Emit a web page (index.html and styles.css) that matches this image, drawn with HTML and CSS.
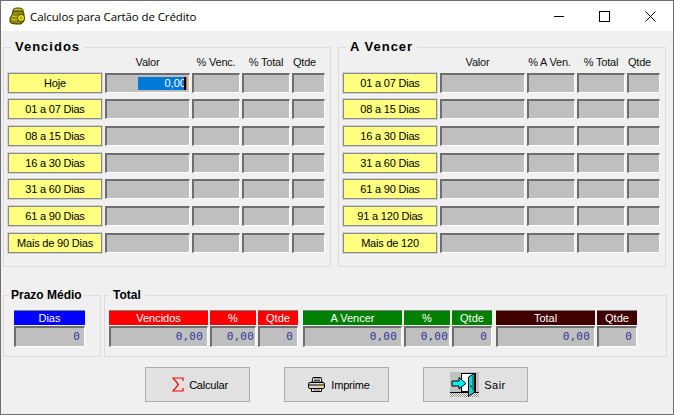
FILE: index.html
```html
<!DOCTYPE html>
<html lang="en">
<head>
  <meta charset="UTF-8">
  <meta name="viewport" content="width=device-width, initial-scale=1.0">
  <title>Calculos para Cartão de Crédito</title>
  <link rel="stylesheet" href="styles.css">
</head>
<body>
  <div class="window">
    <div class="titlebar">
      <svg class="app-icon" width="17" height="18" viewBox="0 0 17 18">
        <ellipse cx="9" cy="3.5" rx="5" ry="2.5" fill="#c9c30a" stroke="#3a3a00"/>
        <path d="M4 4 L3 8 L1 11 L1 15 Q2 17 7 17 L12 17 L15 14 L15 7 L14 4 Z" fill="#8f8a08" stroke="#3a3a00"/>
        <path d="M3 9 Q7 11 10 9 M2 12 Q6 14 9 12" fill="none" stroke="#d8d420"/>
        <circle cx="12" cy="11" r="3.6" fill="#e8e420" stroke="#4a4a00"/>
        <circle cx="12" cy="11" r="1.5" fill="#a8a410"/>
      </svg>
      <span class="title-text">Calculos para Cartão de Crédito</span>
      <div class="win-controls">
        <svg width="10" height="11" viewBox="0 0 10 11"><path d="M0 5.5H10" stroke="#000"/></svg>
        <svg width="11" height="11" viewBox="0 0 11 11"><rect x="0.5" y="0.5" width="10" height="10" fill="none" stroke="#000"/></svg>
        <svg width="11" height="11" viewBox="0 0 11 11"><path d="M0.5 0.5L10.5 10.5M10.5 0.5L0.5 10.5" stroke="#000"/></svg>
      </div>
    </div>

    <div class="content">
      <div class="top-groups">
        <fieldset class="group group-main">
          <legend>Vencidos</legend>
          <div class="table">
            <span></span><span class="col-head">Valor</span><span class="col-head">% Venc.</span><span class="col-head">% Total</span><span class="col-head qtde">Qtde</span>
            <div class="label">Hoje</div>
            <div class="cell"><span class="selected">0,00</span></div><div class="cell"></div><div class="cell"></div><div class="cell"></div>
            <div class="label">01 a 07 Dias</div>
            <div class="cell"></div><div class="cell"></div><div class="cell"></div><div class="cell"></div>
            <div class="label">08 a 15 Dias</div>
            <div class="cell"></div><div class="cell"></div><div class="cell"></div><div class="cell"></div>
            <div class="label">16 a 30 Dias</div>
            <div class="cell"></div><div class="cell"></div><div class="cell"></div><div class="cell"></div>
            <div class="label">31 a 60 Dias</div>
            <div class="cell"></div><div class="cell"></div><div class="cell"></div><div class="cell"></div>
            <div class="label">61 a 90 Dias</div>
            <div class="cell"></div><div class="cell"></div><div class="cell"></div><div class="cell"></div>
            <div class="label">Mais de 90 Dias</div>
            <div class="cell"></div><div class="cell"></div><div class="cell"></div><div class="cell"></div>
          </div>
        </fieldset>

        <fieldset class="group group-main">
          <legend>A Vencer</legend>
          <div class="table">
            <span></span><span class="col-head shift">Valor</span><span class="col-head shift-small">% A Ven.</span><span class="col-head">% Total</span><span class="col-head qtde">Qtde</span>
            <div class="label">01 a 07 Dias</div>
            <div class="cell"></div><div class="cell"></div><div class="cell"></div><div class="cell"></div>
            <div class="label">08 a 15 Dias</div>
            <div class="cell"></div><div class="cell"></div><div class="cell"></div><div class="cell"></div>
            <div class="label">16 a 30 Dias</div>
            <div class="cell"></div><div class="cell"></div><div class="cell"></div><div class="cell"></div>
            <div class="label">31 a 60 Dias</div>
            <div class="cell"></div><div class="cell"></div><div class="cell"></div><div class="cell"></div>
            <div class="label">61 a 90 Dias</div>
            <div class="cell"></div><div class="cell"></div><div class="cell"></div><div class="cell"></div>
            <div class="label">91 a 120 Dias</div>
            <div class="cell"></div><div class="cell"></div><div class="cell"></div><div class="cell"></div>
            <div class="label">Mais de 120</div>
            <div class="cell"></div><div class="cell"></div><div class="cell"></div><div class="cell"></div>
          </div>
        </fieldset>
      </div>

      <div class="bottom-groups">
        <fieldset class="group group-prazo">
          <legend>Prazo Médio</legend>
          <div class="stat w-dias">
            <div class="stat-head blue">Dias</div>
            <div class="stat-value">0</div>
          </div>
        </fieldset>

        <fieldset class="group group-total">
          <legend>Total</legend>
          <div class="stats">
            <div class="stat w-valor"><div class="stat-head red">Vencidos</div><div class="stat-value">0,00</div></div>
            <div class="stat w-perc"><div class="stat-head red">%</div><div class="stat-value">0,00</div></div>
            <div class="stat w-qtde"><div class="stat-head red">Qtde</div><div class="stat-value">0</div></div>
            <div class="stat w-valor sep"><div class="stat-head green">A Vencer</div><div class="stat-value">0,00</div></div>
            <div class="stat w-perc"><div class="stat-head green">%</div><div class="stat-value">0,00</div></div>
            <div class="stat w-qtde"><div class="stat-head green">Qtde</div><div class="stat-value">0</div></div>
            <div class="stat w-valor sep-small"><div class="stat-head maroon">Total</div><div class="stat-value">0,00</div></div>
            <div class="stat w-qtde"><div class="stat-head maroon">Qtde</div><div class="stat-value">0</div></div>
          </div>
        </fieldset>
      </div>

      <div class="actions">
        <button class="btn">
          <svg width="12" height="15" viewBox="0 0 12 15"><path d="M11 4V1H1L6.5 7.5L1 14H11V11" fill="none" stroke="#f00" stroke-width="1.2"/></svg>
          Calcular
        </button>
        <button class="btn">
          <svg width="18" height="15" viewBox="0 0 18 15">
            <path d="M5 .5H13L14 5H4Z" fill="#fff" stroke="#000"/>
            <path d="M6 2H12M6 3.5H12" stroke="#000" stroke-width=".7"/>
            <rect x=".5" y="5.5" width="16" height="6" rx="1.5" fill="#d8d8d8" stroke="#000"/>
            <path d="M1 8H16" stroke="#000"/>
            <path d="M10 9.5H14" stroke="#ffd800" stroke-width="1.5"/>
            <path d="M3.5 11.5H13.5V14.5H3.5Z" fill="#fff" stroke="#000"/>
            <path d="M5 13H12" stroke="#000" stroke-width=".7"/>
          </svg>
          Imprime
        </button>
        <button class="btn">
          <svg width="29" height="25" viewBox="0 0 29 25">
            <defs>
              <pattern id="dither" width="2" height="2" patternUnits="userSpaceOnUse">
                <rect width="2" height="2" fill="#fff"/><rect width="1" height="1" fill="#888"/><rect x="1" y="1" width="1" height="1" fill="#888"/>
              </pattern>
            </defs>
            <rect width="29" height="20" fill="#c0c0c0"/>
            <rect y="20" width="29" height="5" fill="url(#dither)"/>
            <rect x="11.500" y="1.500" width="14" height="18" fill="#fff" stroke="#000"/>
            <path d="M0 20.500H29" stroke="#000"/>
            <path d="M18.500 5L24.500 1.500V20L18.500 24.500Z" fill="#00d8d8" stroke="#000"/>
            <path d="M23 3.500V19" stroke="#008080" stroke-width="1.5"/>
            <circle cx="21" cy="14.500" r="1" fill="#004040"/>
            <path d="M2 9H9V5.500L16 11.500L9 17V14H2Z" fill="#00f0f0" stroke="#000"/>
          </svg>
          <span class="sair">Sair</span>
        </button>
      </div>
    </div>
  </div>
</body>
</html>
```

FILE: styles.css
```css
* {
  box-sizing: border-box;
}
body {
  margin: 0;
  font-family: "Liberation Sans", Arial, sans-serif;
  font-size: 11px;
  color: #000;
  background: #f0f0f0;
}
.window {
  width: 674px;
  height: 415px;
  display: flex;
  flex-direction: column;
  border: 1px solid #6f6f6f;
}
.titlebar {
  height: 30px;
  flex: none;
  background: #fff;
  display: flex;
  align-items: center;
  padding-left: 8px;
}
.app-icon {
  margin-right: 4px;
}
.title-text {
  font-family: "Open Sans", sans-serif;
  font-size: 11.5px;
  letter-spacing: -0.1px;
}
.win-controls {
  margin-left: auto;
  margin-right: 17px;
  display: flex;
  align-items: center;
  gap: 35px;
}
.content {
  flex: 1;
  background: #f0f0f0;
  padding: 8px 0 0 2px;
  display: flex;
  flex-direction: column;
}
.top-groups {
  display: flex;
  gap: 7px;
}
.group {
  margin: 0;
  border: 1px solid #dcdcdc;
  padding: 0;
}
.group legend {
  font-size: 13px;
  font-weight: bold;
  line-height: 16px;
  padding: 0 4px;
  margin-left: 3px;
  letter-spacing: 1px;
}
.group-main {
  width: 328px;
  height: 228px;
  padding: 0 0 0 4px;
}
.table {
  display: grid;
  grid-template-columns: 95px 85px 48px 48px 33px;
  grid-template-rows: 11px repeat(7, 20px);
  column-gap: 2px;
  row-gap: 6.67px;
}
.col-head {
  text-align: center;
  line-height: 14px;
  white-space: nowrap;
  letter-spacing: -0.2px;
  color: #111;
}
.shift {
  padding-right: 10px;
}
.shift-small {
  padding-right: 3px;
}
.qtde {
  padding-right: 8px;
}
.label {
  margin-right: 1px;
  background: #ffff80;
  border: 1px solid #8a8a8a;
  box-shadow: 0 0 0 0.5px #b0b0b0;
  text-align: center;
  line-height: 18px;
  letter-spacing: -0.2px;
}
.cell {
  background: #bfbfbf;
  border-style: solid;
  border-width: 2px 1px 1px 2px;
  border-color: #6e6e6e #fff #fff #6e6e6e;
  display: flex;
  justify-content: flex-end;
  align-items: center;
  overflow: hidden;
}
.selected {
  position: relative;
  width: 49px;
  height: 13px;
  margin-right: 2px;
  background: #0078d7;
  color: #fff;
  text-align: right;
  line-height: 13px;
  border-right: 1px solid #e06a10;
}
.selected::after {
  content: "";
  position: absolute;
  right: 0;
  top: 0;
  width: 2px;
  height: 13px;
  background: #000;
}
.bottom-groups {
  display: flex;
  gap: 3px;
  margin-top: 20px;
}
.group-prazo {
  width: 98px;
  height: 70px;
  padding: 0 0 0 10px;
}
.group-prazo legend {
  padding: 0 2px;
  margin-left: -5px;
  font-size: 12px;
  letter-spacing: 0;
}
.group-total {
  width: 563px;
  height: 70px;
  padding: 0 0 0 4px;
}
.group-total legend {
  margin-left: 0;
  font-size: 12px;
  letter-spacing: 0;
}
.stats {
  display: flex;
  gap: 2px;
  padding-top: 7px;
}
.stat {
  display: flex;
  flex-direction: column;
  gap: 1px;
}
.w-dias {
  width: 71px;
  margin-top: 7px;
}
.w-valor {
  width: 99px;
}
.w-perc {
  width: 46px;
}
.w-qtde {
  width: 40px;
}
.sep {
  margin-left: 3px;
}
.sep-small {
  margin-left: 2px;
}
.stat-head {
  height: 15px;
  line-height: 14px;
  color: #fff;
  text-align: center;
  border-top: 1px solid #808080;
}
.blue {
  background: #0000ff;
}
.red {
  background: #ff0000;
}
.green {
  background: #008000;
}
.maroon {
  background: #400000;
}
.stat-value {
  height: 21px;
  background: #bfbfbf;
  border-style: solid;
  border-width: 2px 1px 1px 2px;
  border-color: #6e6e6e #fff #fff #6e6e6e;
  color: #35359a;
  text-align: right;
  font-family: "DejaVu Sans Mono", monospace;
  font-size: 11px;
  line-height: 17px;
  padding-right: 4px;
  letter-spacing: 0.2px;
}
.w-perc .stat-value {
  padding-right: 1px;
}
.actions {
  display: flex;
  justify-content: center;
  gap: 34px;
  margin-top: 10px;
  padding-right: 4px;
}
.btn {
  width: 105px;
  height: 35px;
  background: #e1e1e1;
  border: 1px solid #adadad;
  font-family: "Liberation Sans", Arial, sans-serif;
  font-size: 11px;
  letter-spacing: -0.2px;
  color: #000;
  display: flex;
  align-items: center;
  justify-content: center;
  gap: 5px;
  padding: 0 0 0 6px;
}
.sair {
  letter-spacing: 0.5px;
}
```
